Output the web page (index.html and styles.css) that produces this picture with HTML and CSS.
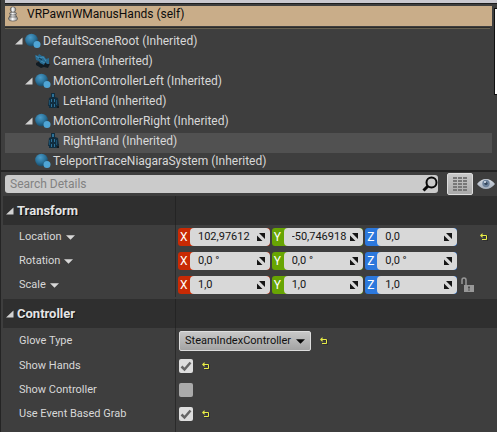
FILE: index.html
```
<!DOCTYPE html>
<html lang="en">
<head>
<meta charset="utf-8">
<title>VRPawnWManusHands</title>
<link rel="stylesheet" href="styles.css">
</head>
<body>
<svg class="defs" aria-hidden="true">
  <defs>
    <radialGradient id="ball" cx=".4" cy=".3" r=".7"><stop offset="0" stop-color="#4b9cc9"/><stop offset=".6" stop-color="#2a7199"/><stop offset="1" stop-color="#174a68"/></radialGradient>
    <linearGradient id="lid" x2="0" y2="1"><stop offset="0" stop-color="#d5dbe3"/><stop offset="1" stop-color="#a3adba"/></linearGradient>
    <linearGradient id="ivory"><stop offset="0" stop-color="#777"/><stop offset=".45" stop-color="#fff"/><stop offset="1" stop-color="#888"/></linearGradient>
  </defs>
  <symbol id="scene" viewBox="0 0 16 16"><circle cx="6.5" cy="7" r="6.3" fill="url(#ball)"/><circle cx="12" cy="11.5" r="3.5" fill="#4fa5d5"/></symbol>
  <symbol id="camera" viewBox="0 0 16 16"><path d="M1 10l4-2 10 3-2 4-4-1-3 1-5-3z" fill="#111b22"/><path d="M0 2l3 1 1-2 3 2 2 0 2 3 3-1v6l-2 0-2-2-1 3-4-2-1-2-3-1z" fill="#286b91"/><path d="M1 3l3 2 4-1 3 4M6 8l4 2" fill="none" stroke="#438eb7"/><path d="M4 5l3 2" stroke="#153547" stroke-width="1"/></symbol>
  <symbol id="body" viewBox="0 0 16 16"><path d="M9 11h5v4H9z" fill="#15191c"/><path d="M6 0h4v4l3 1 1 8h-2v2H4v-2H3l1-8 2-1z" fill="#112d3f"/><path d="M7 1h2v3H7zM6 6h1v3H6zM9 6h1v3H9zM6 11h1v3H6zM9 11h1v3H9z" fill="#2c7198"/><path d="M4.500 7v5M11.500 7v5" stroke="#1c506e"/></symbol>
  <symbol id="open" viewBox="0 0 8 8"><path d="M7.500.5v7H0z" fill="#d2d2d2"/></symbol>
  <symbol id="down" viewBox="0 0 8 4"><path d="M0 0h8L4 4z" fill="currentColor"/></symbol>
  <symbol id="drag" viewBox="0 0 8 8"><path d="M2 0h6v6zM0 2.500v5.500h5.500z" fill="#151515"/></symbol>
  <symbol id="reset" viewBox="0 0 8 8"><path d="M3 3h5v5H3" fill="none" stroke="#222"/><path d="M1 2.500h5.500v4H2" fill="none" stroke="#e8ed46"/><path d="M0 2.500L2.500 0v5z" fill="#e8ed46"/></symbol>
</svg>

<main class="editor">
  <section class="components" aria-label="Components">
    <div class="toolbar-edge"></div>
    <div class="tree">
      <div class="node root">
        <svg class="pawn" viewBox="0 0 12 16" aria-hidden="true"><g fill="url(#ivory)" stroke="#444" stroke-width=".6"><ellipse cx="6" cy="12.500" rx="4.500" ry="2.500"/><path d="M3.500 8h5l1 3h-7z"/><ellipse cx="6" cy="7.500" rx="3.500" ry="1.500"/><circle cx="6" cy="3.500" r="2.700"/></g></svg>
        <span>VRPawnWManusHands (self)</span>
      </div>
      <div class="rule"></div>
      <div class="node"><svg class="open"><use href="#open"/></svg><svg class="kind"><use href="#scene"/></svg><span>DefaultSceneRoot (Inherited)</span></div>
      <div class="node child"><i class="open"></i><svg class="kind"><use href="#camera"/></svg><span>Camera (Inherited)</span></div>
      <div class="node child"><svg class="open"><use href="#open"/></svg><svg class="kind"><use href="#scene"/></svg><span>MotionControllerLeft (Inherited)</span></div>
      <div class="node grandchild"><i class="open"></i><svg class="kind"><use href="#body"/></svg><span>LetHand (Inherited)</span></div>
      <div class="node child"><svg class="open"><use href="#open"/></svg><svg class="kind"><use href="#scene"/></svg><span>MotionControllerRight (Inherited)</span></div>
      <div class="node grandchild hovered"><i class="open"></i><svg class="kind"><use href="#body"/></svg><span>RightHand (Inherited)</span></div>
      <div class="node child last"><i class="open"></i><svg class="kind"><use href="#scene"/></svg><span>TeleportTraceNiagaraSystem (Inherited)</span></div>
    </div>
    <div class="scroll-thumb"></div>
  </section>

  <section class="details" aria-label="Details">
    <div class="searchbar">
      <label class="search">
        <input type="text" placeholder="Search Details" aria-label="Search Details">
        <svg viewBox="0 0 16 16" aria-hidden="true"><circle cx="9.500" cy="6.500" r="5" fill="none" stroke="#080808" stroke-width="2"/><path d="M6 10L1.500 14.500" stroke="#080808" stroke-width="3"/></svg>
      </label>
      <button class="matrix" aria-label="Property matrix"><svg viewBox="0 0 14 15" aria-hidden="true"><path d="M0 1h14M0 4h14M0 7h14M0 10h14M0 13h14" stroke="#777" stroke-width="2" stroke-dasharray="4 1"/></svg></button>
      <button class="view" aria-label="View options"><svg viewBox="0 0 18 12" aria-hidden="true"><path d="M0 6Q4 1 9 1t9 5q-4 5-9 5T0 6z" fill="url(#lid)"/><circle cx="9" cy="5.500" r="3.700" fill="#6d829b"/><circle cx="9" cy="5.500" r="1.600" fill="#34465c"/><circle cx="8" cy="4" r="1" fill="#dce5ef"/></svg></button>
    </div>

    <h2 class="heading"><svg class="open"><use href="#open"/></svg><span>Transform</span></h2>
    <div class="property">
      <button class="name">Location <svg><use href="#down"/></svg></button>
      <div class="value vector">
        <label class="axis x"><b>X</b><span><input value="102,97612"><svg><use href="#drag"/></svg></span></label>
        <label class="axis y"><b>Y</b><span><input value="-50,746918"><svg><use href="#drag"/></svg></span></label>
        <label class="axis z"><b>Z</b><span><input value="0,0"><svg><use href="#drag"/></svg></span></label>
        <i></i>
        <button class="reset" aria-label="Reset location"><svg><use href="#reset"/></svg></button>
      </div>
    </div>
    <div class="property">
      <button class="name">Rotation <svg><use href="#down"/></svg></button>
      <div class="value vector">
        <label class="axis x"><b>X</b><span><input value="0,0 °"><svg><use href="#drag"/></svg></span></label>
        <label class="axis y"><b>Y</b><span><input value="0,0 °"><svg><use href="#drag"/></svg></span></label>
        <label class="axis z"><b>Z</b><span><input value="0,0 °"><svg><use href="#drag"/></svg></span></label>
      </div>
    </div>
    <div class="property">
      <button class="name">Scale <svg><use href="#down"/></svg></button>
      <div class="value vector">
        <label class="axis x"><b>X</b><span><input value="1,0"><svg><use href="#drag"/></svg></span></label>
        <label class="axis y"><b>Y</b><span><input value="1,0"><svg><use href="#drag"/></svg></span></label>
        <label class="axis z"><b>Z</b><span><input value="1,0"><svg><use href="#drag"/></svg></span></label>
        <button class="lock" aria-label="Lock scale ratio"><svg viewBox="0 0 14 16" aria-hidden="true"><path d="M1 7V3q0-2 2-2t2 2v5" fill="none" stroke="#989898" stroke-width="1.500"/><path d="M3 8h10v7H3z" fill="#989898"/><path d="M8 9.500v2M8 12.500v1" stroke="#333" stroke-width="1.500"/></svg></button>
      </div>
    </div>

    <h2 class="heading second"><svg class="open"><use href="#open"/></svg><span>Controller</span></h2>
    <div class="property tall">
      <label class="name" for="glove">Glove Type</label>
      <div class="value">
        <span class="select"><select id="glove"><option>SteamIndexController</option></select><svg><use href="#down"/></svg></span>
        <button class="reset" aria-label="Reset glove type"><svg><use href="#reset"/></svg></button>
      </div>
    </div>
    <div class="property">
      <label class="name" for="hands">Show Hands</label>
      <div class="value"><span class="check"><input type="checkbox" id="hands" checked><svg viewBox="0 0 14 14" aria-hidden="true"><path d="M2.500 7.500l3 3 6-7" fill="none" stroke="#666" stroke-width="2.500"/></svg></span><button class="reset" aria-label="Reset show hands"><svg><use href="#reset"/></svg></button></div>
    </div>
    <div class="property">
      <label class="name" for="controller">Show Controller</label>
      <div class="value"><span class="check"><input type="checkbox" id="controller"></span></div>
    </div>
    <div class="property">
      <label class="name" for="grab">Use Event Based Grab</label>
      <div class="value"><span class="check"><input type="checkbox" id="grab" checked><svg viewBox="0 0 14 14" aria-hidden="true"><path d="M2.500 7.500l3 3 6-7" fill="none" stroke="#666" stroke-width="2.500"/></svg></span><button class="reset" aria-label="Reset event based grab"><svg><use href="#reset"/></svg></button></div>
    </div>
    <div class="rest"></div>
  </section>
</main>
</body>
</html>
```
FILE: styles.css
```
* { box-sizing: border-box; }
body {
  margin: 0;
  background: #3e3e3e;
  color: #d8d8d8;
  font: 11px/16px Roboto, "Liberation Sans", sans-serif;
}
button, input, select { font: inherit; color: inherit; margin: 0; padding: 0; border: 0; background: none; }
svg { display: block; flex: none; }
.defs { position: absolute; width: 0; height: 0; }
.editor {
  display: flex;
  flex-direction: column;
  min-height: 100vh;
  border-left: 1px solid #242424;
  overflow: hidden;
}

.components { position: relative; padding-left: 4px; border-bottom: 2px solid #242424; }
.toolbar-edge { height: 4px; background: #c9c8cf; border-bottom: 1px solid #1d1d1d; }
.tree { padding-top: 2px; margin-right: 5px; font-size: 12px; }
.node { display: flex; align-items: center; gap: 2px; height: 20px; padding: 0 0 4px 10px; }
.child { padding-left: 20px; }
.grandchild { padding-left: 30px; }
.root { gap: 8px; padding-left: 2px; background: #c9ad89; color: #0c0c0c; }
.hovered { background: #515151; }
.last { height: 17px; padding-bottom: 1px; }
.rule { height: 2px; margin: 1px 2px 4px 0; border-top: 1px solid #2c2b29; border-bottom: 1px solid #66604f; }
.open { width: 8px; height: 8px; flex: none; }
.kind { width: 16px; height: 16px; }
.pawn { width: 12px; height: 16px; }
.scroll-thumb {
  position: absolute;
  top: 8px;
  right: 0;
  width: 3px;
  height: 87px;
  background: #fff;
  border: 1px solid #111;
  border-right: 0;
}

.details { flex: 1; display: flex; flex-direction: column; }
.searchbar { display: flex; align-items: center; height: 24px; padding: 0 2px 0 4px; font-size: 12px; }
.search {
  flex: 1;
  display: flex;
  align-items: center;
  height: 18px;
  padding: 0 0 0 5px;
  background: #cbcbcb;
  border-radius: 3px;
}
.search input { flex: 1; min-width: 0; outline: 0; color: #222; }
.search input::placeholder { color: #828282; opacity: 1; }
.search svg { width: 16px; height: 16px; }
.matrix {
  display: grid;
  place-items: center;
  width: 26px;
  height: 22px;
  margin: 0 4px 0 9px;
  background: linear-gradient(#c9c9c9, #a9a9a9);
  border: 1px solid #ddd;
  border-radius: 2px;
}
.matrix svg { width: 14px; height: 15px; }
.view svg { width: 18px; height: 12px; }

.heading {
  display: flex;
  align-items: center;
  gap: 3px;
  height: 29px;
  margin: 0 0 0 2px;
  padding-left: 3px;
  background: linear-gradient(to right, transparent 172px, #242424 172px, #242424 173px, transparent 173px) #2f2f2f;
  color: #e4e4e4;
  font-size: 13px;
  font-weight: 700;
  text-shadow: 1px 1px #111;
}
.second { margin-top: 2px; }
.property, .rest {
  display: grid;
  grid-template-columns: 174px 1fr;
  height: 24px;
  background: linear-gradient(to right, transparent 174px, #2a2a2a 174px, #2a2a2a 175px, transparent 175px);
}
.rest { flex: 1; }
.tall { height: 26px; }
.name { display: flex; align-items: center; gap: 4px; padding-left: 18px; text-align: left; }
.name svg { width: 9px; height: 5px; }
.value { display: flex; align-items: center; padding-left: 4px; }
.vector {
  display: grid;
  grid-template-columns: repeat(3, 1fr) 14px 22px;
  gap: 2px;
  padding-left: 3px;
}
.axis { display: flex; height: 18px; border-radius: 3px; overflow: hidden; }
.axis b { width: 14px; padding-left: 2px; font-size: 12px; line-height: 18px; font-weight: 400; color: #fff; }
.axis span {
  flex: 1;
  display: flex;
  align-items: center;
  min-width: 0;
  margin-left: -2px;
  padding: 0 5px 0 8px;
  background: #d8d8d8;
  border-radius: 4px;
}
.axis input { flex: 1; min-width: 0; width: 0; outline: 0; color: #151515; }
.axis svg { width: 8px; height: 8px; }
.x { background: #c92a04; }
.y { background: #68a503; }
.z { background: #2c78dc; }
.reset { margin-left: 9px; }
.reset svg { width: 8px; height: 8px; }
.vector .reset { margin-left: 5px; }
.lock svg { width: 14px; height: 16px; margin-left: 2px; }

.select { position: relative; display: flex; }
.select select {
  appearance: none;
  height: 20px;
  width: 132px;
  padding: 0 16px 0 5px;
  color: #111;
  background: linear-gradient(#c8c8c8, #a3a3a3);
  border: 1px solid #ddd;
  border-radius: 2px;
}
.select svg { position: absolute; right: 6px; top: 8px; width: 9px; height: 5px; color: #080808; pointer-events: none; }
.check { position: relative; display: flex; }
.check input { appearance: none; width: 14px; height: 14px; background: #aaa; border-radius: 2px; }
.check input:checked { background: #dedede; }
.check svg { position: absolute; inset: 0; width: 14px; height: 14px; pointer-events: none; }
```
